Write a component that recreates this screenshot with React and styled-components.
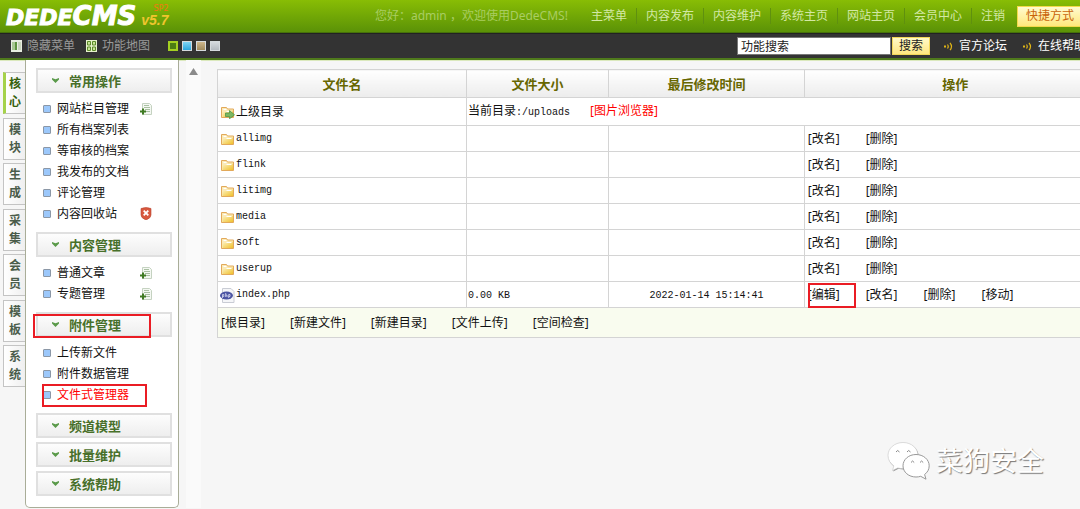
import React from "react";
import styled, { createGlobalStyle } from "styled-components";

const GlobalStyle = createGlobalStyle`
  * {
    box-sizing: border-box;
  }

  body {
    margin: 0;
    overflow: hidden;
    background: #f6f6f6;
    color: #111;
    font-family: "Noto Sans", "Noto Sans CJK SC", sans-serif;
    font-size: 12px;
    line-height: 16px;
  }

  a {
    color: inherit;
    text-decoration: none;
  }

  button,
  input {
    font: inherit;
  }

  ul {
    list-style: none;
    margin: 0;
    padding: 0;
  }
`;

/* ---------- icons ---------- */

const HideMenuIcon = () => (
  <svg width="11" height="12" viewBox="0 0 11 12">
    <rect width="11" height="12" fill="#e9eee2" />
    <rect x="1" y="2" width="3" height="8" fill="#a9c894" />
    <rect x="4" y="2" width="2" height="8" fill="#5f9440" />
    <rect x="7" y="2" width="3" height="8" fill="#c9d6bd" />
  </svg>
);

const MapIcon = () => (
  <svg width="11" height="12" viewBox="0 0 11 12">
    <rect width="11" height="12" fill="#e6f2cc" />
    <path
      d="M1.5 1.5h3v3.5h-3zM6.5 1.5h3v3.5h-3zM1.5 7h3v3.5h-3zM6.5 7h3v3.5h-3z"
      fill="#c6e494"
      stroke="#5c8a2a"
    />
  </svg>
);

const HornIcon = () => (
  <svg width="9" height="9" viewBox="0 0 9 9" fill="none" stroke="#e0b516">
    <path d="M0 4.5h2" strokeWidth="2" />
    <path d="M3.5 2.5q1.5 2 0 4M6 .8q3 3.7 0 7.4" strokeWidth="1.2" />
  </svg>
);

const ArrowDownIcon = () => (
  <svg width="7" height="5" viewBox="0 0 7 5">
    <path d="M0 0l3.5 1.3L7 0v1.4L3.5 5 0 1.4z" fill="#5a9a4a" />
  </svg>
);

const AddIcon = () => (
  <svg width="12" height="12" viewBox="0 0 12 12">
    <path d="M2.500.5h7l2 2v9h-9z" fill="#f4f8f2" stroke="#c5d2c1" />
    <path d="M4 2.500h5M4 4.500h6M5 6.500h5M6 8.500h4" stroke="#a9c0a2" />
    <path d="M0 8.500h6M3 5.500v6" stroke="#3f7a22" strokeWidth="2" />
  </svg>
);

const RecycleIcon = () => (
  <svg width="12" height="13" viewBox="0 0 12 13">
    <path d="M1 1.500Q6-.5 11 1.500V8q0 3-5 5-5-2-5-5z" fill="#d8583f" stroke="#b8452f" strokeWidth=".6" />
    <path d="M3.700 3.700l4.600 4.600M8.300 3.700L3.700 8.300" stroke="#fff" strokeWidth="1.8" />
  </svg>
);

const FolderIcon = ({ up }) => (
  <svg width="15" height="14" viewBox="0 0 15 14">
    <defs>
      <linearGradient id="folder" x1="0" y1="0" x2="1" y2="1">
        <stop offset="0" stopColor="#fdf3c4" />
        <stop offset="1" stopColor="#f0c02c" />
      </linearGradient>
    </defs>
    <path d="M1.500 12.500v-10h5l1 1.500h6v8.500z" fill="#fbeab6" stroke="#e2a95a" />
    <path d="M2.500 12V7h4l1.500-1.500h5V12z" fill="url(#folder)" />
    <path d="M3.500 4.500h3M6.500 6.500h5" stroke="#fff" />
    {up && (
      <path d="M5.500 8h4V5.500l5 4.300-5 4V11.500h-4z" fill="#7cb862" stroke="#4f9446" strokeWidth=".8" />
    )}
  </svg>
);

const PhpIcon = () => (
  <svg width="15" height="15" viewBox="0 0 15 15">
    <path d="M2.500.5h8.500l3 3v11H2.500z" fill="#f5f6f8" stroke="#c9ccd4" />
    <ellipse cx="6.500" cy="7.500" rx="6.500" ry="4" fill="#4c55a3" />
    <path
      d="M2.500 10V6.500h1.300v2H2.500M5.700 5v4M5.700 7h1.300v2M8.700 10V6.500H10v2H8.700"
      fill="none"
      stroke="#d9dcf3"
      strokeWidth=".8"
    />
  </svg>
);

const WechatIcon = () => (
  <svg width="44" height="40" viewBox="0 0 44 40">
    <g fill="#999" transform="translate(.7 .9)">
      <path d="M16 1.500C7.500 1.500 1 7.300 1 14.500c0 4.300 2.300 8 5.800 10.400L5.500 29.500l5.300-2.600c1.600.5 3.400.7 5.200.7 8.500 0 15-5.900 15-13.100S24.500 1.500 16 1.500z" />
    </g>
    <path
      d="M16 1.500C7.500 1.500 1 7.300 1 14.500c0 4.300 2.300 8 5.800 10.400L5.500 29.500l5.300-2.600c1.600.5 3.400.7 5.200.7 8.500 0 15-5.900 15-13.100S24.500 1.500 16 1.500z"
      fill="#fff"
      stroke="#bbb"
      strokeWidth=".5"
    />
    <path
      d="M29 13.500c-7.300 0-13 5-13 11.300S21.700 36 29 36c1.700 0 3.300-.2 4.700-.7l5.300 2.900-1.400-4.700c2.900-2.100 4.600-5.200 4.600-8.700 0-6.300-5.900-11.300-13.200-11.300z"
      fill="#fff"
      stroke="#999"
      strokeWidth="1"
    />
    <g fill="none" stroke="#888">
      <path d="M9 11q1.500-3 3.500 0M20 11q1.500-3 3.500 0M24 21.500q1.500-3 3.200 0M33 21.500q1.500-3 3.200 0" />
    </g>
  </svg>
);

/* ---------- top ---------- */

const Header = styled.header`
  display: flex;
  align-items: center;
  height: 33px;
  padding-left: 6px;
  background: linear-gradient(#88bd05, #5b9207);
  border-bottom: 1px solid #47720a;
  white-space: nowrap;
`;

const Logo = styled.a`
  display: flex;
  align-items: baseline;
  padding-top: 2px;
  color: #fff;
  font: italic bold 22px/26px "DejaVu Sans", sans-serif;
  -webkit-text-stroke: 1px #fff;
`;

const LogoBig = styled.span`
  font-size: 26px;
`;

const Version = styled.div`
  display: flex;
  flex-direction: column;
  margin-left: 5px;
  color: #f0c52e;
  font: italic bold 14px/14px "Liberation Sans", sans-serif;
`;

const Patch = styled.span`
  align-self: flex-end;
  color: #f07a10;
  font: 8px/8px "DejaVu Sans", sans-serif;
`;

const Greeting = styled.span`
  margin-left: auto;
  margin-right: 14px;
  color: #a9cd62;
`;

const TopNav = styled.nav`
  display: flex;
  align-items: center;
  margin-right: 3px;
  color: #d3e8a4;
`;

const TopLink = styled.a`
  padding: 0 9px;

  & + & {
    border-left: 1px solid #5f900f;
  }
`;

const Shortcut = styled.button`
  height: 21px;
  padding: 0 6px 0 8px;
  border: 1px solid #f5d94c;
  border-right: 0;
  background: linear-gradient(#fffbd0, #ffe87c);
  color: #c9640a;
  line-height: 18px;
`;

const Toolbar = styled.div`
  display: flex;
  align-items: center;
  height: 27px;
  padding-left: 11px;
  background: #333;
  border-top: 1px solid #222;
  border-bottom: 2px solid #4f7a1c;
  box-shadow: 0 1px 0 #dbe9bd;
  white-space: nowrap;
`;

const ToolLink = styled.a`
  display: flex;
  align-items: center;
  gap: ${props => (props.$bright ? "6px" : "5px")};
  margin-right: ${props => (props.$bright ? "16px" : "11px")};
  color: ${props => (props.$bright ? "#fff" : "#999")};
`;

const Swatches = styled.div`
  display: flex;
  gap: 4px;
  margin-left: 7px;
`;

const Swatch = styled.button`
  width: 10px;
  height: 10px;
  padding: 0;
  border: ${props => (props.$active ? "2px solid #a4d022" : "1px solid #d5dadd")};
  background: ${props => props.$color};
`;

const Search = styled.form`
  display: flex;
  align-items: center;
  gap: 1px;
  margin: 0 14px 0 auto;
`;

const SearchInput = styled.input`
  width: 154px;
  height: 18px;
  padding: 0 3px;
  border: 1px solid #777;
  background: #fff;
  color: #222;
`;

const SearchButton = styled.button`
  width: 38px;
  height: 18px;
  padding: 0;
  border: 1px solid #f2d75a;
  background: linear-gradient(#fffac8, #ffe781);
  color: #222;
  line-height: 16px;
`;

const HelpLinks = styled.div`
  display: flex;
  margin-right: -22px;
`;

/* ---------- left side ---------- */

const Body = styled.div`
  display: flex;
  align-items: flex-start;
`;

const Tabs = styled.nav`
  display: flex;
  flex-direction: column;
  justify-content: space-between;
  width: 25px;
  min-height: 315px;
  margin-top: 12px;
  padding-left: 3px;
`;

const Tab = styled.a`
  display: flex;
  align-items: center;
  height: 42px;
  padding-right: 5px;
  padding-left: ${props => (props.$active ? "3px" : "5px")};
  border: 1px solid #c4c4c4;
  border-right: 0;
  border-left: ${props => (props.$active ? "3px solid #a5d24a" : "1px solid #c4c4c4")};
  background: linear-gradient(90deg, #fff, #efefef);
  color: ${props => (props.$active ? "#35610c" : "#4a5c4a")};
  font-weight: bold;
  line-height: 18px;
`;

const Panel = styled.aside`
  width: 154px;
  padding: 8px 6px 11px 10px;
  border: 1px solid #a9ad98;
  border-top: 0;
  border-radius: 0 0 5px 5px;
  background: #fff;
`;

const Section = styled.section`
  & + & {
    margin-top: 4px;
  }
`;

const SectionTitle = styled.button`
  position: relative;
  display: flex;
  align-items: center;
  gap: 10px;
  width: 100%;
  height: 25px;
  padding: 0 0 0 14px;
  border: 2px solid #e0e0e0;
  background: linear-gradient(#fdfdfd, #eee);
  color: #48702a;
  font-size: 13px;
  font-weight: bold;
  line-height: 20px;
`;

const Items = styled.ul`
  padding: 5px 0 4px 7px;
`;

const Item = styled.li`
  position: relative;
  display: flex;
  align-items: center;
  gap: 6px;
  height: 21px;
  color: ${props => (props.$active ? "#f00" : "#111")};

  &::before {
    content: "";
    width: 6px;
    height: 6px;
    border: 1px solid #8b97a6;
    border-radius: 1px;
    background: #9cc8fb;
  }
`;

const ItemLink = styled.a`
  min-width: 77px;
`;

const Mark = styled.span`
  position: absolute;
  inset: ${props => props.$inset};
  border: 2px solid #ea1c24;
  pointer-events: none;
`;

const ScrollStrip = styled.div`
  width: 15px;
  align-self: stretch;
  margin-left: 7px;
  padding: 3px;
  background: #fafafa;
`;

/* ---------- file table ---------- */

const Main = styled.main`
  flex: 1;
  padding: 9px 0 0 16px;
`;

const FileTable = styled.table`
  width: calc(100% + 27px);
  table-layout: fixed;
  border-collapse: collapse;
  background: #fff;
  white-space: nowrap;
`;

const HeadCell = styled.th`
  width: ${props => props.$width};
  height: 28px;
  padding: 0;
  border: 1px solid #d4d4d4;
  background: linear-gradient(#fff, #ececec);
  color: #666600;
  font-size: 13px;
`;

const Row = styled.tr`
  height: ${props => (props.$tall ? "28px" : "26px")};
`;

const Cell = styled.td`
  padding: ${props => (props.$actions ? "1px 3px 0" : "1px 1px 0")};
  border: 1px solid #d4d4d4;
  text-align: ${props => props.$align || "left"};
`;

const FootCell = styled.td`
  height: 30px;
  padding: 0 3px;
  border: 1px solid #d4d4d4;
  background: #f9fcef;
`;

const FileLink = styled.a`
  display: flex;
  align-items: center;
  gap: 1px;
  padding-left: 1px;
`;

const Mono = styled.span`
  font-family: "Liberation Mono", monospace;
  font-size: 10px;
`;

const Actions = styled.div`
  display: flex;
  gap: ${props => props.$gap || "25px"};
`;

const Action = styled.a`
  position: relative;
  color: ${props => (props.$red ? "#f00" : "inherit")};
`;

const Watermark = styled.div`
  position: absolute;
  right: 36px;
  bottom: 28px;
  display: flex;
  align-items: center;
  gap: 5px;
  color: #fff;
  font-size: 27px;
  font-weight: normal;
  line-height: 40px;
  text-shadow: 1px 1px 1px #777;
`;

const topLinks = ["主菜单", "内容发布", "内容维护", "系统主页", "网站主页", "会员中心", "注销"];

const tabs = ["核心", "模块", "生成", "采集", "会员", "模板", "系统"];

const sections = [
  {
    title: "常用操作",
    items: [
      { label: "网站栏目管理", icon: <AddIcon /> },
      { label: "所有档案列表" },
      { label: "等审核的档案" },
      { label: "我发布的文档" },
      { label: "评论管理" },
      { label: "内容回收站", icon: <RecycleIcon /> },
    ],
  },
  {
    title: "内容管理",
    items: [
      { label: "普通文章", icon: <AddIcon /> },
      { label: "专题管理", icon: <AddIcon /> },
    ],
  },
  {
    title: "附件管理",
    marked: true,
    items: [
      { label: "上传新文件" },
      { label: "附件数据管理" },
      { label: "文件式管理器", active: true },
    ],
  },
  { title: "频道模型" },
  { title: "批量维护" },
  { title: "系统帮助" },
];

const folders = ["allimg", "flink", "litimg", "media", "soft", "userup"];

const footLinks = ["根目录", "新建文件", "新建目录", "文件上传", "空间检查"];

const App = () => (
  <>
    <GlobalStyle />
    <Header>
      <Logo href="#">
        DEDE<LogoBig>CMS</LogoBig>
      </Logo>
      <Version>
        <Patch>SP2</Patch>
        v5.7
      </Version>
      <Greeting>您好：admin ，欢迎使用DedeCMS!</Greeting>
      <TopNav>
        {topLinks.map(label => (
          <TopLink key={label} href="#">{label}</TopLink>
        ))}
      </TopNav>
      <Shortcut type="button">快捷方式</Shortcut>
    </Header>

    <Toolbar>
      <ToolLink href="#"><HideMenuIcon />隐藏菜单</ToolLink>
      <ToolLink href="#"><MapIcon />功能地图</ToolLink>
      <Swatches>
        <Swatch type="button" aria-label="绿色" $active $color="#4c7d13" />
        <Swatch type="button" aria-label="蓝色" $color="linear-gradient(#7fd4f5, #2ba5dc)" />
        <Swatch type="button" aria-label="棕色" $color="linear-gradient(#cdb78c, #a08a5c)" />
        <Swatch type="button" aria-label="灰色" $color="linear-gradient(#d5dade, #b4bac0)" />
      </Swatches>
      <Search onSubmit={e => e.preventDefault()}>
        <SearchInput aria-label="功能搜索" defaultValue="功能搜索" />
        <SearchButton>搜索</SearchButton>
      </Search>
      <HelpLinks>
        <ToolLink href="#" $bright><HornIcon />官方论坛</ToolLink>
        <ToolLink href="#" $bright><HornIcon />在线帮助</ToolLink>
      </HelpLinks>
    </Toolbar>

    <Body>
      <Tabs>
        {tabs.map((label, i) => (
          <Tab key={label} href="#" $active={i === 0}>{label}</Tab>
        ))}
      </Tabs>
      <Panel>
        {sections.map(section => (
          <Section key={section.title}>
            <SectionTitle type="button">
              <ArrowDownIcon />
              {section.title}
              {section.marked && <Mark $inset="0 19px -3px -5px" />}
            </SectionTitle>
            {section.items && (
              <Items>
                {section.items.map(item => (
                  <Item key={item.label} $active={item.active}>
                    <ItemLink href="#">{item.label}</ItemLink>
                    {item.icon}
                    {item.active && <Mark $inset="0 25px -2px -1px" />}
                  </Item>
                ))}
              </Items>
            )}
          </Section>
        ))}
      </Panel>
      <ScrollStrip>
        <svg width="9" height="7" viewBox="0 0 9 7">
          <path d="M4.500 0L9 7H0z" fill="#8a8a8a" />
        </svg>
      </ScrollStrip>
      <Main>
        <FileTable>
          <thead>
            <tr>
              <HeadCell $width="28%">文件名</HeadCell>
              <HeadCell $width="16%">文件大小</HeadCell>
              <HeadCell $width="22%">最后修改时间</HeadCell>
              <HeadCell $width="34%">操作</HeadCell>
            </tr>
          </thead>
          <tbody>
            <Row $tall>
              <Cell><FileLink href="#"><FolderIcon up />上级目录</FileLink></Cell>
              <Cell colSpan={3}>
                <Actions $gap="20px">
                  <span>当前目录<Mono>:/uploads</Mono></span>
                  <Action href="#" $red>[图片浏览器]</Action>
                </Actions>
              </Cell>
            </Row>
            {folders.map(name => (
              <Row key={name}>
                <Cell><FileLink href="#"><FolderIcon /><Mono>{name}</Mono></FileLink></Cell>
                <Cell />
                <Cell />
                <Cell $actions>
                  <Actions $gap="26px">
                    <Action href="#">[改名]</Action>
                    <Action href="#">[删除]</Action>
                  </Actions>
                </Cell>
              </Row>
            ))}
            <Row>
              <Cell><FileLink href="#"><PhpIcon /><Mono>index.php</Mono></FileLink></Cell>
              <Cell><Mono>0.00 KB</Mono></Cell>
              <Cell $align="center"><Mono>2022-01-14 15:14:41</Mono></Cell>
              <Cell $actions>
                <Actions $gap="26px">
                  <Action href="#">
                    [编辑]
                    <Mark $inset="-4px -16px -5px 0" />
                  </Action>
                  <Action href="#">[改名]</Action>
                  <Action href="#">[删除]</Action>
                  <Action href="#">[移动]</Action>
                </Actions>
              </Cell>
            </Row>
          </tbody>
          <tfoot>
            <tr>
              <FootCell colSpan={4}>
                <Actions>
                  {footLinks.map(label => (
                    <Action key={label} href="#">[{label}]</Action>
                  ))}
                </Actions>
              </FootCell>
            </tr>
          </tfoot>
        </FileTable>
      </Main>
    </Body>

    <Watermark>
      <WechatIcon />
      菜狗安全
    </Watermark>
  </>
);

export default App;
